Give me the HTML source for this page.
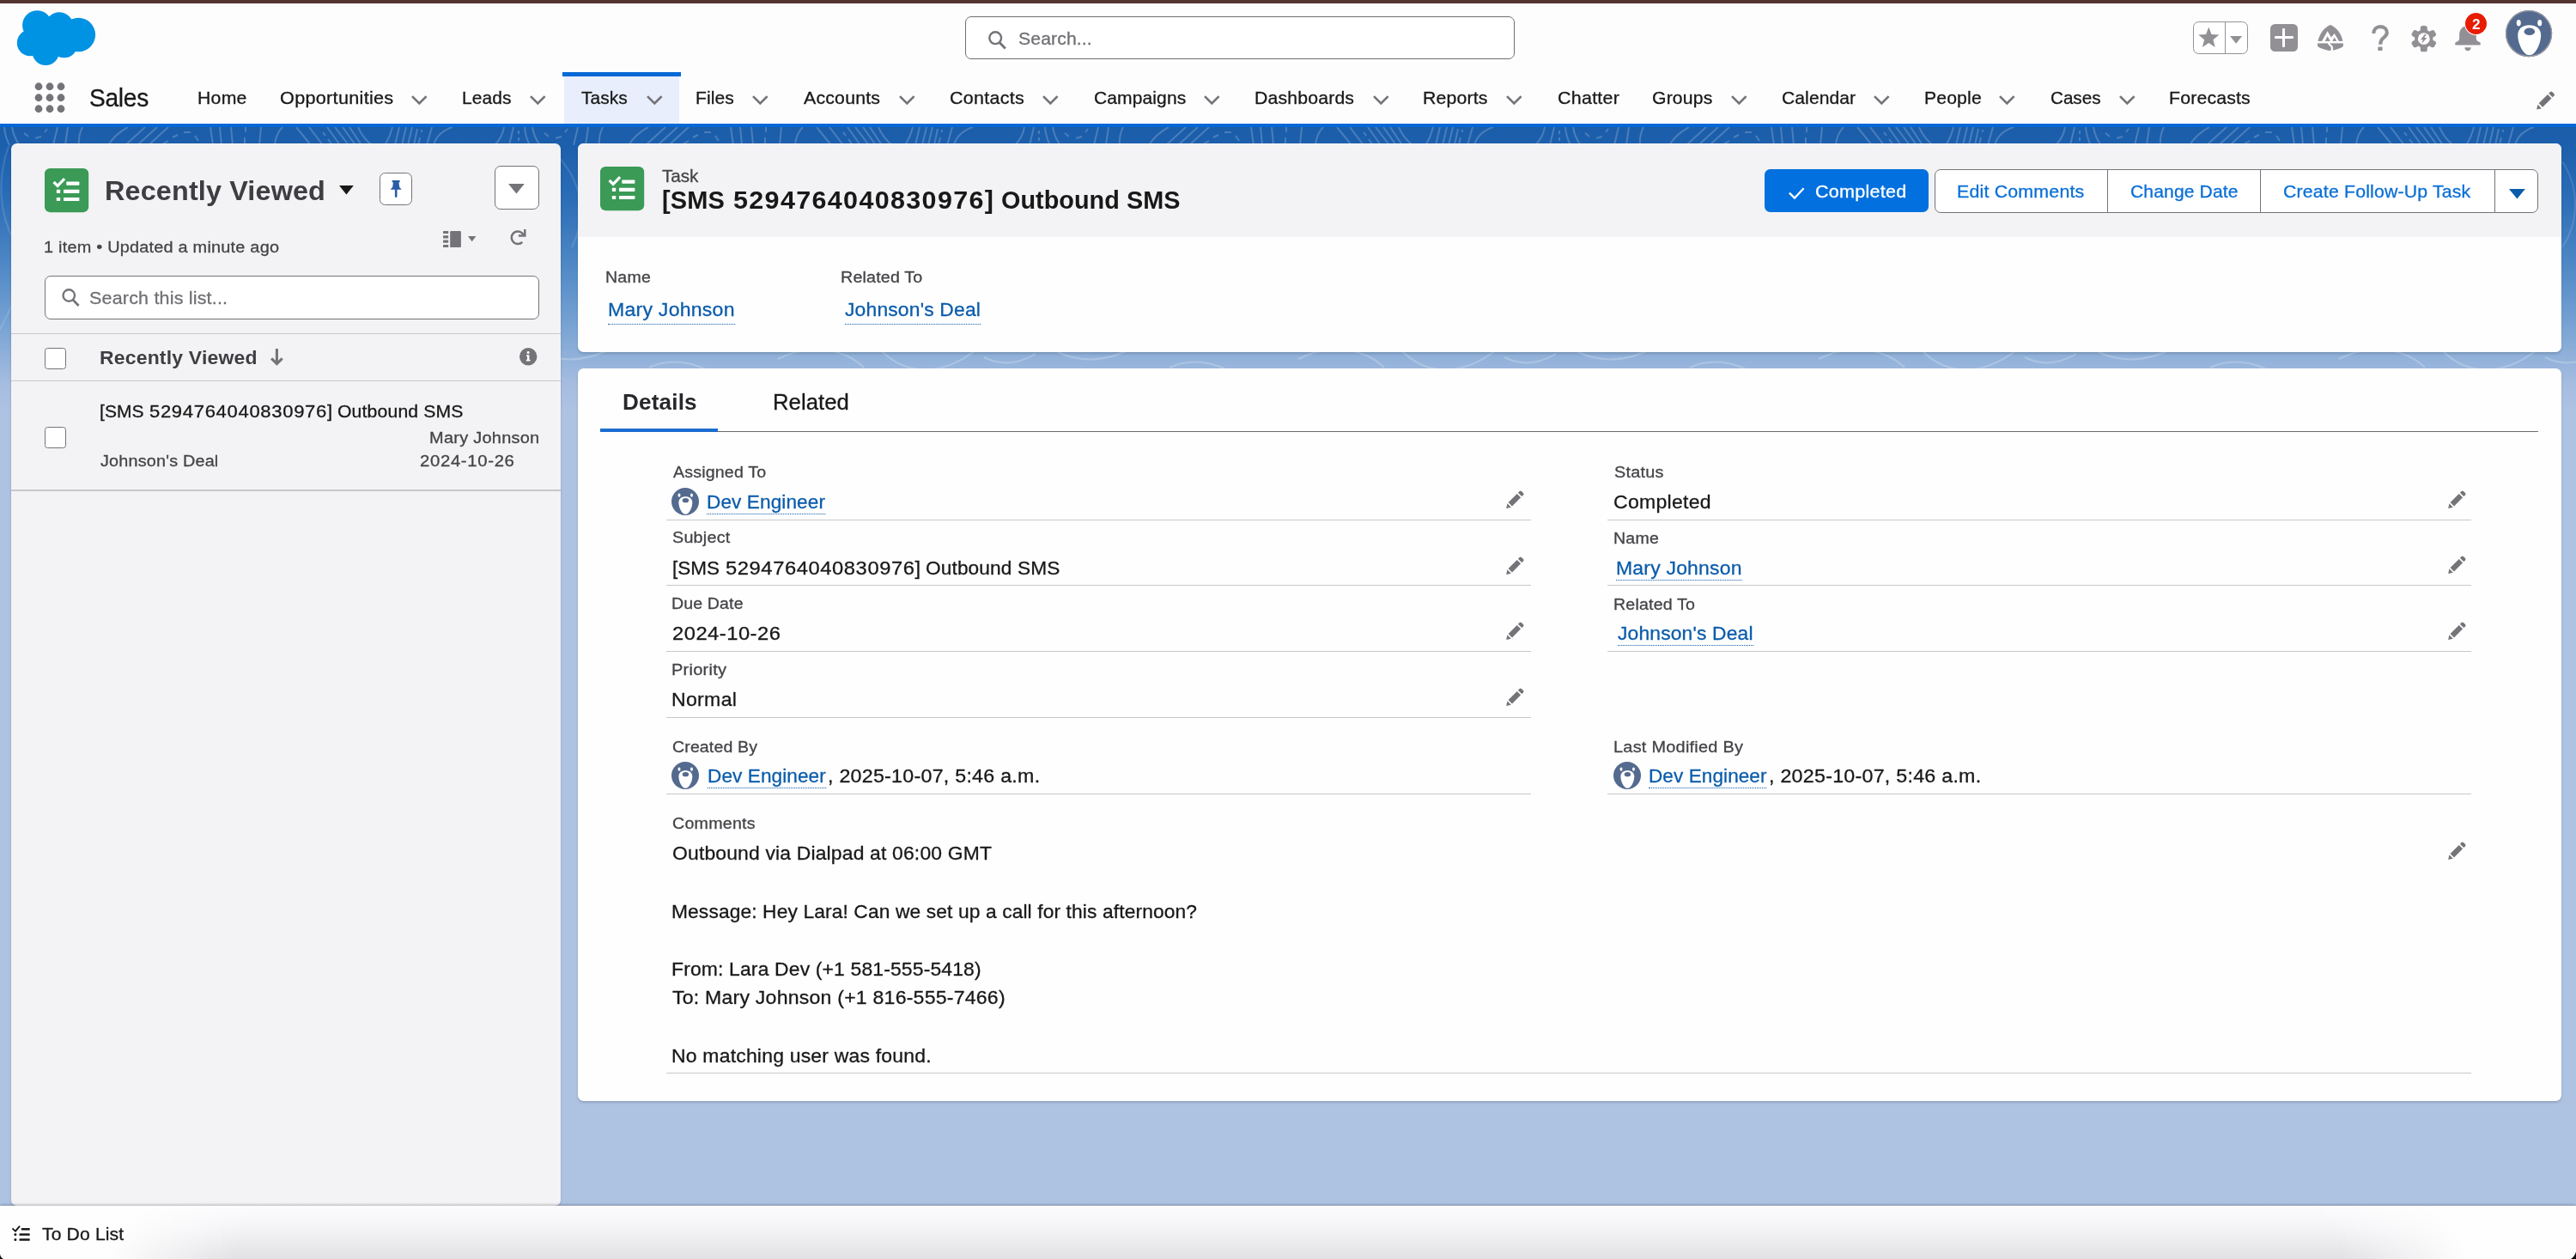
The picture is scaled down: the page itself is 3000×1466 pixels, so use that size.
<!DOCTYPE html>
<html><head><meta charset="utf-8"><title>Task</title>
<style>
*{box-sizing:border-box;margin:0;padding:0}
html,body{width:3000px;height:1466px;overflow:hidden}
body{position:relative;background:#AEC2E2;font-family:"Liberation Sans",sans-serif;}
.a{position:absolute}
.t{position:absolute;white-space:nowrap;line-height:1;display:block;transform-origin:0 0;-webkit-text-stroke:.3px currentColor}
.lk{border-bottom:1.6px dotted #0B5CAB;padding-bottom:1.8px}
.lk.h{padding-bottom:4.4px}
.ln{position:absolute;height:1.5px;background:#C9C7CC}
svg{position:absolute;overflow:visible}
</style></head><body>
<!-- banner -->
<div class="a" id="banner" style="left:0;top:148px;width:3000px;height:330px;background:linear-gradient(to bottom,#1B5DA9 0px,#1C5FAC 22px,#2A6CB6 80px,#4A84C3 150px,#6E9DD0 215px,#8FB0D9 265px,#A6BDE0 300px,#AEC2E2 330px)"></div>
<svg id="pat" style="left:0;top:148px" width="3000" height="330" viewBox="0 0 3000 330">
<defs>
<pattern id="pp" width="606" height="330" patternUnits="userSpaceOnUse">
<g fill="none" stroke="#fff" stroke-width="2">
<path stroke-opacity=".2" d="M5 0Q6 12 11 21M14 0Q16 12 23 21M28 7L33 11M41 13L48 11M52 6L55 2M67 0L62 21M79 0L76 21M96 0Q91 10 92 21M149 0Q134 8 126 21M169 0L146 21M183 0L160 21M196 0L173 21M196 16L189 20M201 12L207 9M214 6L222 6M227 10L231 16M245 0L248 21M256 0L258 21M269 0L271 21M286 0L286 6M285 12L285 21M304 0L302 21M329 0Q321 8 320 21M345 0L362 21M360 0L376 21M376 6L379 10M382 14L387 21M381 0L396 21M390 0L406 21M399 0L414 21M407 0L421 21M417 0Q422 12 433 21M457 0Q454 12 448 21M465 0L460 21M473 0L468 21M480 0L475 21M486 2L482 21M491 3L491 6M489 12L487 21M503 0L497 21M527 0Q509 6 505 21M587 0Q585 12 576 21M598 0L593 21M604 4L604 8M604 12L604 16"/>
<path stroke-opacity=".13" d="M10 22c-14 40-10 80 6 110s4 70-20 110M40 30c30 30 40 70 20 110M600 24c-14 40-18 70-6 110M560 40c20 30 20 70 0 100"/>
<path stroke-opacity=".22" d="M300 270c40-20 80-10 100 10M420 260c30 30 70 30 110 0M150 280c20-10 50-10 80 10M20 262c30 14 60 10 90-6M540 268c20 10 40 8 60-4"/>
</g>
</pattern>
</defs>
<rect width="3000" height="330" fill="url(#pp)"/>
</svg>

<!-- header -->
<div class="a" style="left:0;top:0;width:3000px;height:144px;background:#FDFDFE"></div>
<div class="a" style="left:0;top:0;width:3000px;height:3.8px;background:#55342F"></div>
<div class="a" style="left:0;top:144px;width:3000px;height:4px;background:#0568D6"></div>
<!-- active tab -->
<div class="a" style="left:657px;top:88px;width:134px;height:56px;background:#E8EEFC"></div>
<div class="a" style="left:655px;top:84px;width:138px;height:5px;background:#0568D6"></div>

<!-- cloud -->
<svg style="left:0;top:0" width="130" height="90" viewBox="0 0 130 90"><g fill="#0092E3">
<circle cx="43.3" cy="29.4" r="17.2"/><circle cx="69" cy="30.5" r="16.3"/><circle cx="91.3" cy="40.5" r="19.8"/>
<circle cx="35" cy="50" r="15.2"/><circle cx="53.2" cy="60.4" r="15.6"/><circle cx="74.7" cy="51.6" r="15.6"/><circle cx="58" cy="44" r="18"/></g></svg>

<!-- waffle -->
<svg style="left:40px;top:96px" width="36" height="36" viewBox="0 0 36 36"><g fill="#747378">
<circle cx="5" cy="4.75" r="4.4"/><circle cx="18" cy="4.75" r="4.4"/><circle cx="31" cy="4.75" r="4.4"/>
<circle cx="5" cy="17.75" r="4.4"/><circle cx="18" cy="17.75" r="4.4"/><circle cx="31" cy="17.75" r="4.4"/>
<circle cx="5" cy="30.75" r="4.4"/><circle cx="18" cy="30.75" r="4.4"/><circle cx="31" cy="30.75" r="4.4"/></g></svg>

<!-- global search -->
<div class="a" style="left:1124px;top:19px;width:640px;height:49.5px;border:1.5px solid #6F6E73;border-radius:7px;background:#fff"></div>
<svg style="left:1151px;top:35.6px" width="21" height="21" viewBox="0 0 21 21"><circle cx="8.200" cy="8.200" r="6.900" fill="none" stroke="#747378" stroke-width="2.400"/><path d="M12.800 13.200L19.800 20.400" stroke="#747378" stroke-width="2.900" stroke-linecap="butt"/></svg>

<!-- CHEVRONS -->
<svg style="left:478.75px;top:111px" width="18.6" height="11.2" viewBox="0 0 18.6 11.2"><path fill="none" stroke="#747378" stroke-width="2.700" d="M1 1.100l8.300 8.300 8.300-8.300"/></svg>
<svg style="left:617px;top:111px" width="18.6" height="11.2" viewBox="0 0 18.6 11.2"><path fill="none" stroke="#747378" stroke-width="2.700" d="M1 1.100l8.300 8.300 8.300-8.300"/></svg>
<svg style="left:752.5px;top:111px" width="18.6" height="11.2" viewBox="0 0 18.6 11.2"><path fill="none" stroke="#747378" stroke-width="2.700" d="M1 1.100l8.300 8.300 8.300-8.300"/></svg>
<svg style="left:876.25px;top:111px" width="18.6" height="11.2" viewBox="0 0 18.6 11.2"><path fill="none" stroke="#747378" stroke-width="2.700" d="M1 1.100l8.300 8.300 8.300-8.300"/></svg>
<svg style="left:1047px;top:111px" width="18.6" height="11.2" viewBox="0 0 18.6 11.2"><path fill="none" stroke="#747378" stroke-width="2.700" d="M1 1.100l8.300 8.300 8.300-8.300"/></svg>
<svg style="left:1214.25px;top:111px" width="18.6" height="11.2" viewBox="0 0 18.6 11.2"><path fill="none" stroke="#747378" stroke-width="2.700" d="M1 1.100l8.300 8.300 8.300-8.300"/></svg>
<svg style="left:1402px;top:111px" width="18.6" height="11.2" viewBox="0 0 18.6 11.2"><path fill="none" stroke="#747378" stroke-width="2.700" d="M1 1.100l8.300 8.300 8.300-8.300"/></svg>
<svg style="left:1599px;top:111px" width="18.6" height="11.2" viewBox="0 0 18.6 11.2"><path fill="none" stroke="#747378" stroke-width="2.700" d="M1 1.100l8.300 8.300 8.300-8.300"/></svg>
<svg style="left:1754.25px;top:111px" width="18.6" height="11.2" viewBox="0 0 18.6 11.2"><path fill="none" stroke="#747378" stroke-width="2.700" d="M1 1.100l8.300 8.300 8.300-8.300"/></svg>
<svg style="left:2015.5px;top:111px" width="18.6" height="11.2" viewBox="0 0 18.6 11.2"><path fill="none" stroke="#747378" stroke-width="2.700" d="M1 1.100l8.300 8.300 8.300-8.300"/></svg>
<svg style="left:2182px;top:111px" width="18.6" height="11.2" viewBox="0 0 18.6 11.2"><path fill="none" stroke="#747378" stroke-width="2.700" d="M1 1.100l8.300 8.300 8.300-8.300"/></svg>
<svg style="left:2328px;top:111px" width="18.6" height="11.2" viewBox="0 0 18.6 11.2"><path fill="none" stroke="#747378" stroke-width="2.700" d="M1 1.100l8.300 8.300 8.300-8.300"/></svg>
<svg style="left:2468px;top:111px" width="18.6" height="11.2" viewBox="0 0 18.6 11.2"><path fill="none" stroke="#747378" stroke-width="2.700" d="M1 1.100l8.300 8.300 8.300-8.300"/></svg>

<!-- nav pencil -->
<svg style="left:2953.5px;top:105.5px" width="21.5" height="21.5" viewBox="0 0 21 21"><g fill="#747378">
<path d="M.2 20.900l1.200-5.600 4.400 4.400z"/>
<path d="M2.600 14L12.700 3.900l4.400 4.400L7 18.400z"/>
<path d="M13.900 2.700l1.700-1.700a1.600 1.600 0 0 1 2.300 0l2.100 2.100a1.600 1.600 0 0 1 0 2.300l-1.700 1.700z"/>
</g></svg>

<!-- favorites -->
<div class="a" style="left:2554px;top:25px;width:64px;height:37.8px;border:1.3px solid #939196;border-radius:6.5px;background:#fff"></div>
<div class="a" style="left:2590.8px;top:25px;width:1.3px;height:37.8px;background:#939196"></div>
<svg style="left:2560.400px;top:31.300px" width="24.600" height="24.600" viewBox="0 0 24 24"><path fill="#929095" d="M12 .6l3.1 8.2 8.7.5-6.8 5.5 2.3 8.5L12 18.500 4.700 23.300l2.300-8.500L.200 9.300l8.700-.5z"/></svg>
<svg style="left:2597.4px;top:42.1px" width="14.2" height="8.8" viewBox="0 0 14 8.800"><path fill="#929095" d="M0 0h14L7 8.800z"/></svg>
<!-- plus -->
<div class="a" style="left:2644px;top:28px;width:32px;height:32px;border-radius:5.5px;background:#929095"></div>
<div class="a" style="left:2648.8px;top:42.4px;width:22px;height:3.1px;background:#fff;border-radius:1px"></div>
<div class="a" style="left:2658.3px;top:33px;width:3.1px;height:21.6px;background:#fff;border-radius:1px"></div>
<!-- trailhead -->
<svg style="left:2699px;top:29px" width="30" height="30" viewBox="0 0 30 30">
<path fill="#929095" d="M15 0c1.200 0 7 3.500 10.500 9C28.800 14 30 20.500 30 23.500c0 1.500-1 2.500-3.500 3.500C23 28.500 18.500 30 15 30s-8-1.500-11.500-3C1 26 0 25 0 23.500 0 20.500 1.200 14 4.500 9 8 3.500 13.800 0 15 0z"/>
<path fill="#fff" d="M4.600 19.800L11.600 7.300l4.300 7.200 3.800-4.600 5.800 9.900z"/>
<path fill="#929095" d="M8.700 18.900l2.900-5.600 3.200 5.600z"/>
<path fill="#929095" d="M17.300 18.900l2.300-4.400 2.700 4.400z"/>
<path fill="#fff" d="M0 18.900h30v2.500H0z"/>
<path fill="none" stroke="#fff" stroke-width="2.300" d="M12.800 21c.6 2.400 4.200 3 4.200 5.800 0 1.200-.5 2.200-.3 3.600"/>
</svg>
<!-- question -->
<svg style="left:2762px;top:29px" width="20" height="30" viewBox="0 0 20 30"><path fill="none" stroke="#929095" stroke-width="4.100" stroke-linecap="butt" d="M2.300 10C2.400 5.200 5.600 2.150 10 2.150c4.600 0 7.850 2.800 7.850 6.700 0 3.400-2 4.800-4.400 6.500-2.300 1.600-3.300 3-3.300 7.500"/><rect x="7.300" y="25.400" width="5.300" height="4.600" rx="1" fill="#929095"/></svg>
<!-- gear -->
<svg style="left:2809px;top:29.800px" width="27.600" height="30.300" viewBox="-13.800 -15.150 27.600 30.300">
<g fill="#929095"><circle r="10.600"/>
<g id="tooth"><rect x="-4" y="-15.150" width="8" height="8" rx="2.600"/></g>
<g transform="rotate(60)"><rect x="-4" y="-15.150" width="8" height="8" rx="2.600"/></g><g transform="rotate(120)"><rect x="-4" y="-15.150" width="8" height="8" rx="2.600"/></g><g transform="rotate(180)"><rect x="-4" y="-15.150" width="8" height="8" rx="2.600"/></g><g transform="rotate(240)"><rect x="-4" y="-15.150" width="8" height="8" rx="2.600"/></g><g transform="rotate(300)"><rect x="-4" y="-15.150" width="8" height="8" rx="2.600"/></g></g>
<circle r="6.900" fill="#fff"/>
<path fill="#929095" d="M1.300-5.400L-3.900 1h2.900L-2.300 5.600 3.700-1.100H.6L3-5.400z"/>
</svg>
<!-- bell -->
<svg style="left:2859px;top:29.800px" width="30" height="29.500" viewBox="0 0 30 29.500">
<path fill="#929095" d="M15 0c5.500 0 9.800 4 9.800 10v4.500c0 2.200 1.200 3.600 3.400 4.300 1 .3 1.600.8 1.600 1.800v1.200c0 .5-.4.800-.9.800H1.100c-.5 0-.9-.3-.9-.8v-1.200c0-1 .6-1.500 1.600-1.800 2.200-.7 3.400-2.100 3.400-4.300V10C5.200 4 9.500 0 15 0z"/>
<path fill="#929095" d="M11.300 25.200h7.400c0 2-1.600 4-3.700 4s-3.700-2-3.700-4z"/>
</svg>
<div class="a" style="left:2870.8px;top:15px;width:25.400px;height:25.400px;border-radius:50%;background:#E81C02;box-shadow:0 0 0 1px #fff"></div>
<!-- avatar big -->
<svg style="left:2917.500px;top:12.400px" width="54.200" height="54.200" viewBox="0 0 54 54"><g><circle cx="27" cy="27" r="27" fill="#546A8F"/>
<ellipse cx="15.200" cy="14.600" rx="2.500" ry="3.600" fill="#fff"/><ellipse cx="39.600" cy="14.600" rx="2.500" ry="3.600" fill="#fff"/>
<path fill="#fff" d="M27.600 17.200c7.900 0 13.400 4.100 13.400 11.700 0 9-5.900 23.200-13.400 23.200S14.200 37.900 14.200 28.900c0-7.600 5.500-11.700 13.400-11.700z"/>
<ellipse cx="27.700" cy="24.700" rx="6.300" ry="4.300" fill="#546A8F"/></g><circle cx="27" cy="27" r="26.400" fill="none" stroke="#9A9A9F" stroke-width="1.300"/></svg>

<!-- LEFT PANEL -->
<div class="a" style="left:13px;top:167px;width:640px;height:1236.500px;background:#F3F2F4;border-radius:6.500px;box-shadow:0 1px 3px rgba(0,0,0,.18)"></div>
<div class="ln" style="left:13px;top:387.800px;width:640px"></div>
<div class="ln" style="left:13px;top:442.600px;width:640px"></div>
<div class="ln" style="left:13px;top:570.400px;width:640px"></div>
<svg style="left:52px;top:195.700px" width="51.200" height="51.200" viewBox="0 0 51.200 51.200"><g><rect width="51.200" height="51.200" rx="6.200" fill="#3A9A56"/>
<path fill="none" stroke="#fff" stroke-width="3.200" d="M10.600 16l4.500 4.400 8-8.300"/>
<g fill="#fff"><rect x="25.300" y="15.500" width="15.100" height="4.300" rx=".7"/><rect x="13.800" y="24.800" width="4.400" height="4.200" rx=".7"/><rect x="22" y="24.800" width="18.400" height="4.200" rx=".7"/><rect x="13.800" y="33.900" width="4.400" height="4.200" rx=".7"/><rect x="22" y="33.900" width="18.400" height="4.200" rx=".7"/></g></g></svg>
<svg style="left:394.800px;top:216px" width="16.800" height="10.400" viewBox="0 0 16.800 10.400"><path fill="#181818" d="M0 0h16.800L8.400 10.400z"/></svg>
<!-- pin button -->
<div class="a" style="left:442px;top:201px;width:38px;height:38px;border:1.200px solid #747378;border-radius:6.500px;background:#fff"></div>
<svg style="left:455px;top:210px" width="12.400" height="20.200" viewBox="0 0 12.400 20.200"><path fill="#2A5CA8" d="M1.700 0h8.900v2.200H9.500l.6 5.200c.2 1.300 2.200 1.600 2.300 3.400H7.500v8.200l-1.300 1.200-1.300-1.200v-8.200H0c.1-1.800 2.100-2.100 2.300-3.400l.6-5.200H1.700z"/></svg>
<!-- dropdown button -->
<div class="a" style="left:576.200px;top:193px;width:51.600px;height:50.600px;border:1.200px solid #747378;border-radius:7px;background:#fff"></div>
<svg style="left:592.300px;top:214.100px" width="18.800" height="11.600" viewBox="0 0 18.800 11.600"><path fill="#747378" d="M0 0h18.800L9.400 11.600z"/></svg>
<!-- list view icon -->
<svg style="left:515.600px;top:268.700px" width="21" height="19.100" viewBox="0 0 21 19.100"><g fill="#747378"><rect x="0" y="0" width="6.200" height="3.100" rx=".6"/><rect x="0" y="5.300" width="6.200" height="3.100" rx=".6"/><rect x="0" y="10.600" width="6.200" height="3.100" rx=".6"/><rect x="0" y="15.900" width="6.200" height="3.200" rx=".6"/><rect x="8.200" y="0" width="12.700" height="19.100" rx="1.200"/></g></svg>
<svg style="left:544.700px;top:275.200px" width="9.400" height="6.200" viewBox="0 0 9.400 6.200"><path fill="#747378" d="M0 0h9.400L4.700 6.200z"/></svg>
<!-- refresh -->
<svg style="left:592.500px;top:266.800px" width="19.600" height="18.700" viewBox="0 0 19.600 18.700"><path fill="none" stroke="#747378" stroke-width="2.500" d="M15.300 14.800a7.300 7.300 0 1 1-.6-10.700l3.200 3.200"/><path fill="none" stroke="#747378" stroke-width="2.500" d="M18.300 0v7.600h-7.400"/></svg>
<!-- list search -->
<div class="a" style="left:52px;top:321px;width:575.800px;height:50.600px;border:1.300px solid #747378;border-radius:7px;background:#fff"></div>
<svg style="left:71.700px;top:336px" width="21" height="20.500" viewBox="0 0 21 21"><circle cx="8.200" cy="8.200" r="6.900" fill="none" stroke="#747378" stroke-width="2.400"/><path d="M12.800 13.200L19.800 20.400" stroke="#747378" stroke-width="2.900" stroke-linecap="butt"/></svg>
<!-- checkboxes -->
<div class="a" style="left:52px;top:405px;width:25px;height:24.600px;border:1.300px solid #747378;border-radius:3.500px;background:#fff"></div>
<div class="a" style="left:52px;top:497.200px;width:25px;height:24.600px;border:1.300px solid #747378;border-radius:3.500px;background:#fff"></div>
<!-- arrow down -->
<svg style="left:314.800px;top:406.200px" width="14.800" height="19.800" viewBox="0 0 14.800 19.800"><path fill="none" stroke="#747378" stroke-width="3.100" d="M7.400 0v17M1.100 11.300l6.300 6.300 6.300-6.300"/></svg>
<!-- info -->
<svg style="left:605px;top:405px" width="20.400" height="20.400" viewBox="0 0 20.400 20.400"><circle cx="10.200" cy="10.200" r="10.200" fill="#747378"/><circle cx="10.100" cy="5.600" r="1.500" fill="#fff"/><path fill="#fff" d="M8 8.300h3.400v5.500h1.100v1.700H7.900v-1.700h1.100v-3.800H8z"/></svg>

<!-- RIGHT CARD 1 -->
<div class="a" style="left:672.500px;top:167px;width:2310px;height:242.800px;background:#FEFEFE;border-radius:6.500px;box-shadow:0 2px 3px rgba(0,0,0,.16);overflow:hidden"><div style="height:109px;background:#F3F2F4"></div></div>
<svg style="left:699px;top:193.600px" width="51.200" height="51.200" viewBox="0 0 51.200 51.200"><g><rect width="51.200" height="51.200" rx="6.200" fill="#3A9A56"/>
<path fill="none" stroke="#fff" stroke-width="3.200" d="M10.600 16l4.500 4.400 8-8.300"/>
<g fill="#fff"><rect x="25.300" y="15.500" width="15.100" height="4.300" rx=".7"/><rect x="13.800" y="24.800" width="4.400" height="4.200" rx=".7"/><rect x="22" y="24.800" width="18.400" height="4.200" rx=".7"/><rect x="13.800" y="33.900" width="4.400" height="4.200" rx=".7"/><rect x="22" y="33.900" width="18.400" height="4.200" rx=".7"/></g></g></svg>
<!-- buttons -->
<div class="a" style="left:2055px;top:197px;width:191px;height:50px;background:#0270DE;border-radius:6.500px"></div>
<svg style="left:2082.500px;top:217.500px" width="19" height="14" viewBox="0 0 19 14"><path fill="none" stroke="#fff" stroke-width="2.300" d="M.9 6.600L7 12.600 17.600 1.300"/></svg>
<div class="a" style="left:2253px;top:197px;width:703px;height:50.600px;border:1.400px solid #747378;border-radius:7px;background:#fff"></div>
<div class="a" style="left:2453.700px;top:197px;width:1.400px;height:50.600px;background:#747378"></div>
<div class="a" style="left:2631.800px;top:197px;width:1.400px;height:50.600px;background:#747378"></div>
<div class="a" style="left:2904.800px;top:197px;width:1.400px;height:50.600px;background:#747378"></div>
<svg style="left:2922.400px;top:220px" width="18.800" height="11.400" viewBox="0 0 18.800 11.400"><path fill="#0B5CAB" d="M0 0h18.800L9.400 11.400z"/></svg>

<!-- RIGHT CARD 2 -->
<div class="a" style="left:672.500px;top:428.800px;width:2310px;height:853.500px;background:#FEFEFE;border-radius:6.500px;box-shadow:0 2px 3px rgba(0,0,0,.16)"></div>
<div class="a" style="left:699px;top:501.500px;width:2257px;height:1.300px;background:#6B6B70"></div>
<div class="a" style="left:699px;top:498.600px;width:137px;height:4.200px;background:#1B6DD0"></div>
<!-- field lines -->
<div class="ln" style="left:776.250px;top:604.600px;width:1006.800px"></div>
<div class="ln" style="left:776.250px;top:680.800px;width:1006.800px"></div>
<div class="ln" style="left:776.250px;top:757.600px;width:1006.800px"></div>
<div class="ln" style="left:776.250px;top:834.600px;width:1006.800px"></div>
<div class="ln" style="left:776.250px;top:923.800px;width:1006.800px"></div>
<div class="ln" style="left:1872px;top:604.600px;width:1006px"></div>
<div class="ln" style="left:1872px;top:680.800px;width:1006px"></div>
<div class="ln" style="left:1872px;top:757.600px;width:1006px"></div>
<div class="ln" style="left:1872px;top:923.800px;width:1006px"></div>
<div class="ln" style="left:776.250px;top:1248.600px;width:2101.800px"></div>
<!-- pencils -->
<svg style="left:1754px;top:571px" width="21" height="21" viewBox="0 0 21 21"><g fill="#747378">
<path d="M.2 20.900l1.200-5.600 4.400 4.400z"/>
<path d="M2.600 14L12.700 3.900l4.400 4.400L7 18.400z"/>
<path d="M13.900 2.700l1.700-1.700a1.600 1.600 0 0 1 2.300 0l2.100 2.100a1.600 1.600 0 0 1 0 2.300l-1.700 1.700z"/>
</g></svg>
<svg style="left:1754px;top:648px" width="21" height="21" viewBox="0 0 21 21"><g fill="#747378">
<path d="M.2 20.900l1.200-5.600 4.400 4.400z"/>
<path d="M2.600 14L12.700 3.900l4.400 4.400L7 18.400z"/>
<path d="M13.900 2.700l1.700-1.700a1.600 1.600 0 0 1 2.300 0l2.100 2.100a1.600 1.600 0 0 1 0 2.300l-1.700 1.700z"/>
</g></svg>
<svg style="left:1754px;top:724.4px" width="21" height="21" viewBox="0 0 21 21"><g fill="#747378">
<path d="M.2 20.900l1.200-5.600 4.400 4.400z"/>
<path d="M2.600 14L12.700 3.900l4.400 4.400L7 18.400z"/>
<path d="M13.900 2.700l1.700-1.700a1.600 1.600 0 0 1 2.300 0l2.100 2.100a1.600 1.600 0 0 1 0 2.300l-1.700 1.700z"/>
</g></svg>
<svg style="left:1754px;top:800.8px" width="21" height="21" viewBox="0 0 21 21"><g fill="#747378">
<path d="M.2 20.900l1.200-5.600 4.400 4.400z"/>
<path d="M2.600 14L12.700 3.900l4.400 4.400L7 18.400z"/>
<path d="M13.900 2.700l1.700-1.700a1.600 1.600 0 0 1 2.300 0l2.100 2.100a1.600 1.600 0 0 1 0 2.300l-1.700 1.700z"/>
</g></svg>
<svg style="left:2850.5px;top:570.7px" width="21" height="21" viewBox="0 0 21 21"><g fill="#747378">
<path d="M.2 20.900l1.200-5.600 4.400 4.400z"/>
<path d="M2.600 14L12.700 3.900l4.400 4.400L7 18.400z"/>
<path d="M13.900 2.700l1.700-1.700a1.600 1.600 0 0 1 2.300 0l2.100 2.100a1.600 1.600 0 0 1 0 2.300l-1.700 1.700z"/>
</g></svg>
<svg style="left:2850.5px;top:647.4px" width="21" height="21" viewBox="0 0 21 21"><g fill="#747378">
<path d="M.2 20.900l1.200-5.600 4.400 4.400z"/>
<path d="M2.600 14L12.700 3.900l4.400 4.400L7 18.400z"/>
<path d="M13.900 2.700l1.700-1.700a1.600 1.600 0 0 1 2.300 0l2.100 2.100a1.600 1.600 0 0 1 0 2.300l-1.700 1.700z"/>
</g></svg>
<svg style="left:2850.5px;top:724px" width="21" height="21" viewBox="0 0 21 21"><g fill="#747378">
<path d="M.2 20.900l1.200-5.600 4.400 4.400z"/>
<path d="M2.600 14L12.700 3.900l4.400 4.400L7 18.400z"/>
<path d="M13.900 2.700l1.700-1.700a1.600 1.600 0 0 1 2.300 0l2.100 2.100a1.600 1.600 0 0 1 0 2.300l-1.700 1.700z"/>
</g></svg>
<svg style="left:2850.5px;top:979.5px" width="21" height="21" viewBox="0 0 21 21"><g fill="#747378">
<path d="M.2 20.900l1.200-5.600 4.400 4.400z"/>
<path d="M2.600 14L12.700 3.900l4.400 4.400L7 18.400z"/>
<path d="M13.900 2.700l1.700-1.700a1.600 1.600 0 0 1 2.300 0l2.100 2.100a1.600 1.600 0 0 1 0 2.300l-1.700 1.700z"/>
</g></svg>
<!-- small avatars -->
<svg style="left:782px;top:568px" width="32" height="32" viewBox="0 0 54 54"><g><circle cx="27" cy="27" r="27" fill="#546A8F"/>
<ellipse cx="15.200" cy="14.600" rx="2.500" ry="3.600" fill="#fff"/><ellipse cx="39.600" cy="14.600" rx="2.500" ry="3.600" fill="#fff"/>
<path fill="#fff" d="M27.600 17.200c7.900 0 13.400 4.100 13.400 11.700 0 9-5.900 23.200-13.400 23.200S14.200 37.900 14.200 28.900c0-7.600 5.500-11.700 13.400-11.700z"/>
<ellipse cx="27.700" cy="24.700" rx="6.300" ry="4.300" fill="#546A8F"/></g></svg>
<svg style="left:782px;top:887px" width="32" height="32" viewBox="0 0 54 54"><g><circle cx="27" cy="27" r="27" fill="#546A8F"/>
<ellipse cx="15.200" cy="14.600" rx="2.500" ry="3.600" fill="#fff"/><ellipse cx="39.600" cy="14.600" rx="2.500" ry="3.600" fill="#fff"/>
<path fill="#fff" d="M27.600 17.200c7.900 0 13.400 4.100 13.400 11.700 0 9-5.900 23.200-13.400 23.200S14.200 37.900 14.200 28.900c0-7.600 5.500-11.700 13.400-11.700z"/>
<ellipse cx="27.700" cy="24.700" rx="6.300" ry="4.300" fill="#546A8F"/></g></svg>
<svg style="left:1878.500px;top:887px" width="32" height="32" viewBox="0 0 54 54"><g><circle cx="27" cy="27" r="27" fill="#546A8F"/>
<ellipse cx="15.200" cy="14.600" rx="2.500" ry="3.600" fill="#fff"/><ellipse cx="39.600" cy="14.600" rx="2.500" ry="3.600" fill="#fff"/>
<path fill="#fff" d="M27.600 17.200c7.900 0 13.400 4.100 13.400 11.700 0 9-5.900 23.200-13.400 23.200S14.200 37.900 14.200 28.900c0-7.600 5.500-11.700 13.400-11.700z"/>
<ellipse cx="27.700" cy="24.700" rx="6.300" ry="4.300" fill="#546A8F"/></g></svg>

<!-- BOTTOM BAR -->
<div class="a" style="left:0;top:1403.500px;width:3000px;height:62.500px;background:radial-gradient(ellipse 1410px 260px at 1500px 62px,rgba(254,254,254,0) 0%,rgba(254,254,254,0) 87%,#FEFEFE 97.5%),linear-gradient(to bottom,#FCFBFD 0%,#F4F3F6 40%,#E2E1E4 100%);box-shadow:0 -1px 3px rgba(0,0,0,.28)"></div>
<svg style="left:14px;top:1427.300px" width="21" height="18.400" viewBox="0 0 21 18.400"><g fill="#181818"><path fill="none" stroke="#181818" stroke-width="1.900" d="M.4 3.400l3.600 3.300L9 .6"/><rect x="10.800" y="3.100" width="9.900" height="2.400" rx=".5"/><rect x="8.500" y="9.300" width="12.200" height="2.400" rx=".5"/><rect x="8.500" y="15.300" width="12.200" height="2.400" rx=".5"/><circle cx="3.900" cy="10.500" r="1.500"/><circle cx="3.900" cy="16.400" r="1.500"/></g></svg>
<!-- window corners -->
<svg style="left:0;top:1459.500px" width="6.500" height="6.500" viewBox="0 0 10 10"><path d="M0 0A10 10 0 0 0 10 10H0z" fill="#111"/></svg>
<svg style="left:2990.500px;top:1452.500px" width="9.500" height="13.500" viewBox="0 0 10 10" preserveAspectRatio="none"><path d="M10 0A10 10 0 0 1 0 10H10z" fill="#111"/></svg>

<!-- symbol defs -->
<svg width="0" height="0" style="left:0;top:0"><defs>
<g id="pencil" fill="#747378">
<path d="M.2 20.900l1.200-5.600 4.400 4.400z"/>
<path d="M2.600 14L12.700 3.900l4.400 4.400L7 18.400z"/>
<path d="M13.900 2.700l1.700-1.700a1.600 1.600 0 0 1 2.300 0l2.100 2.100a1.600 1.600 0 0 1 0 2.300l-1.700 1.700z"/>
</g>
<g id="task"><rect width="51.200" height="51.200" rx="6.200" fill="#3A9A56"/>
<path fill="none" stroke="#fff" stroke-width="3.200" d="M10.600 16l4.500 4.400 8-8.300"/>
<g fill="#fff"><rect x="25.300" y="15.500" width="15.100" height="4.300" rx=".7"/><rect x="13.800" y="24.800" width="4.400" height="4.200" rx=".7"/><rect x="22" y="24.800" width="18.400" height="4.200" rx=".7"/><rect x="13.800" y="33.900" width="4.400" height="4.200" rx=".7"/><rect x="22" y="33.900" width="18.400" height="4.200" rx=".7"/></g></g>
<g id="bear"><circle cx="27" cy="27" r="27" fill="#546A8F"/>
<ellipse cx="15.200" cy="14.600" rx="2.500" ry="3.600" fill="#fff"/><ellipse cx="39.600" cy="14.600" rx="2.500" ry="3.600" fill="#fff"/>
<path fill="#fff" d="M27.600 17.200c7.900 0 13.400 4.100 13.400 11.700 0 9-5.900 23.200-13.400 23.200S14.200 37.900 14.200 28.900c0-7.600 5.500-11.700 13.400-11.700z"/>
<ellipse cx="27.700" cy="24.700" rx="6.300" ry="4.300" fill="#546A8F"/></g>
</defs></svg>

<div class="a" style="left:0;top:0;width:3000px;height:1466px;will-change:transform">
<span class="t" style="left:1185.98px;top:35.00px;font-size:20.8px;letter-spacing:0.120px;color:#706F74;transform:scaleX(1.0182);">Search...</span>
<span class="t" style="left:2879.26px;top:21.00px;font-size:16px;letter-spacing:0.000px;color:#fff;transform:scaleX(1.0769);font-weight:700;-webkit-text-stroke:0;">2</span>
<span class="t" style="left:103.77px;top:100.00px;font-size:28.8px;letter-spacing:-0.276px;color:#181818;transform:scaleX(0.9770);">Sales</span>
<span class="t" style="left:229.66px;top:104.00px;font-size:20.8px;letter-spacing:0.246px;color:#181818;transform:scaleX(1.0214);">Home</span>
<span class="t" style="left:326.21px;top:104.00px;font-size:20.8px;letter-spacing:0.270px;color:#181818;transform:scaleX(1.0415);">Opportunities</span>
<span class="t" style="left:538.44px;top:104.00px;font-size:20.8px;letter-spacing:0.077px;color:#181818;transform:scaleX(1.0086);">Leads</span>
<span class="t" style="left:677.25px;top:104.00px;font-size:20.8px;letter-spacing:0.048px;color:#181818;transform:scaleX(1.0056);">Tasks</span>
<span class="t" style="left:810.43px;top:104.00px;font-size:20.8px;letter-spacing:0.078px;color:#181818;transform:scaleX(1.0113);">Files</span>
<span class="t" style="left:936.40px;top:104.00px;font-size:20.8px;letter-spacing:0.192px;color:#181818;transform:scaleX(1.0244);">Accounts</span>
<span class="t" style="left:1106.12px;top:104.00px;font-size:20.8px;letter-spacing:0.258px;color:#181818;transform:scaleX(1.0348);">Contacts</span>
<span class="t" style="left:1273.64px;top:104.00px;font-size:20.8px;letter-spacing:0.101px;color:#181818;transform:scaleX(1.0118);">Campaigns</span>
<span class="t" style="left:1461.16px;top:104.00px;font-size:20.8px;letter-spacing:0.165px;color:#181818;transform:scaleX(1.0207);">Dashboards</span>
<span class="t" style="left:1657.41px;top:104.00px;font-size:20.8px;letter-spacing:0.171px;color:#181818;transform:scaleX(1.0223);">Reports</span>
<span class="t" style="left:1813.62px;top:104.00px;font-size:20.8px;letter-spacing:0.237px;color:#181818;transform:scaleX(1.0329);">Chatter</span>
<span class="t" style="left:1924.38px;top:104.00px;font-size:20.8px;letter-spacing:0.160px;color:#181818;transform:scaleX(1.0184);">Groups</span>
<span class="t" style="left:2074.89px;top:104.00px;font-size:20.8px;letter-spacing:0.097px;color:#181818;transform:scaleX(1.0124);">Calendar</span>
<span class="t" style="left:2241.17px;top:104.00px;font-size:20.8px;letter-spacing:0.146px;color:#181818;transform:scaleX(1.0179);">People</span>
<span class="t" style="left:2387.90px;top:104.00px;font-size:20.8px;letter-spacing:-0.046px;color:#181818;transform:scaleX(0.9952);">Cases</span>
<span class="t" style="left:2526.41px;top:104.00px;font-size:20.8px;letter-spacing:0.165px;color:#181818;transform:scaleX(1.0228);">Forecasts</span>
<span class="t" style="left:122.38px;top:206.00px;font-size:32px;letter-spacing:0.138px;color:#3E3E42;transform:scaleX(1.0118);font-weight:700;-webkit-text-stroke:0;">Recently Viewed</span>
<span class="t" style="left:51.45px;top:278.00px;font-size:19.2px;letter-spacing:0.213px;color:#444347;transform:scaleX(1.0362);">1 item • Updated a minute ago</span>
<span class="t" style="left:104.47px;top:337.00px;font-size:20.8px;letter-spacing:0.180px;color:#706F74;transform:scaleX(1.0336);">Search this list...</span>
<span class="t" style="left:116.07px;top:406.00px;font-size:22.4px;letter-spacing:0.198px;color:#3E3E42;transform:scaleX(1.0246);font-weight:700;-webkit-text-stroke:0;">Recently Viewed</span>
<span class="t" style="left:116.09px;top:469.00px;font-size:20.8px;letter-spacing:0.098px;color:#181818;transform:scaleX(1.0092);">[SMS</span>
<span class="t" style="left:173.63px;top:469.00px;font-size:20.8px;letter-spacing:0.635px;color:#181818;transform:scaleX(1.0600);">5294764040830976]</span>
<span class="t" style="left:392.60px;top:469.00px;font-size:20.8px;letter-spacing:0.151px;color:#181818;transform:scaleX(1.0181);">Outbound SMS</span>
<span class="t" style="left:500.34px;top:500.00px;font-size:19.2px;letter-spacing:0.266px;color:#444347;transform:scaleX(1.0386);">Mary Johnson</span>
<span class="t" style="left:117.19px;top:527.00px;font-size:19.2px;letter-spacing:0.197px;color:#444347;transform:scaleX(1.0306);">Johnson&#x27;s Deal</span>
<span class="t" style="left:489.35px;top:527.00px;font-size:19.2px;letter-spacing:0.616px;color:#444347;transform:scaleX(1.0600);">2024-10-26</span>
<span class="t" style="left:770.70px;top:195.00px;font-size:20.8px;letter-spacing:-0.049px;color:#444347;transform:scaleX(0.9948);">Task</span>
<span class="t" style="left:771.34px;top:219.00px;font-size:28.8px;letter-spacing:0.105px;color:#181818;transform:scaleX(1.0068);font-weight:700;-webkit-text-stroke:0;">[SMS</span>
<span class="t" style="left:853.53px;top:219.00px;font-size:28.8px;letter-spacing:1.250px;color:#181818;transform:scaleX(1.0600);font-weight:700;-webkit-text-stroke:0;">5294764040830976]</span>
<span class="t" style="left:1165.72px;top:219.00px;font-size:28.8px;letter-spacing:0.018px;color:#181818;transform:scaleX(1.0014);font-weight:700;-webkit-text-stroke:0;">Outbound SMS</span>
<span class="t" style="left:2114.17px;top:213.00px;font-size:20.8px;letter-spacing:0.275px;color:#fff;transform:scaleX(1.0347);">Completed</span>
<span class="t" style="left:2279.16px;top:213.00px;font-size:20.8px;letter-spacing:0.196px;color:#0A6FD6;transform:scaleX(1.0259);">Edit Comments</span>
<span class="t" style="left:2480.99px;top:213.00px;font-size:20.8px;letter-spacing:0.114px;color:#0A6FD6;transform:scaleX(1.0144);">Change Date</span>
<span class="t" style="left:2659.48px;top:213.00px;font-size:20.8px;letter-spacing:0.161px;color:#0A6FD6;transform:scaleX(1.0236);">Create Follow-Up Task</span>
<span class="t" style="left:705.37px;top:313.00px;font-size:19.2px;letter-spacing:0.204px;color:#444347;transform:scaleX(1.0192);">Name</span>
<span class="t" style="left:979.26px;top:313.00px;font-size:19.2px;letter-spacing:0.168px;color:#444347;transform:scaleX(1.0261);">Related To</span>
<span class="t lk h" style="left:708.05px;top:350.00px;font-size:22.4px;letter-spacing:0.239px;color:#0B5CAB;transform:scaleX(1.0295);">Mary Johnson</span>
<span class="t lk h" style="left:983.59px;top:350.00px;font-size:22.4px;letter-spacing:0.163px;color:#0B5CAB;transform:scaleX(1.0216);">Johnson&#x27;s Deal</span>
<span class="t" style="left:724.67px;top:456.00px;font-size:25.6px;letter-spacing:0.169px;color:#29272B;transform:scaleX(1.0191);font-weight:700;-webkit-text-stroke:0;">Details</span>
<span class="t" style="left:900.04px;top:456.00px;font-size:25.6px;letter-spacing:0.037px;color:#181818;transform:scaleX(1.0039);">Related</span>
<span class="t" style="left:784.15px;top:540.00px;font-size:19.2px;letter-spacing:0.156px;color:#444347;transform:scaleX(1.0230);">Assigned To</span>
<span class="t lk" style="left:823.33px;top:574.00px;font-size:22.4px;letter-spacing:0.080px;color:#0B5CAB;transform:scaleX(1.0100);">Dev Engineer</span>
<span class="t" style="left:783.08px;top:616.00px;font-size:19.2px;letter-spacing:0.207px;color:#444347;transform:scaleX(1.0304);">Subject</span>
<span class="t" style="left:783.14px;top:651.00px;font-size:22.4px;letter-spacing:0.044px;color:#181818;transform:scaleX(1.0038);">[SMS</span>
<span class="t" style="left:844.57px;top:651.00px;font-size:22.4px;letter-spacing:0.551px;color:#181818;transform:scaleX(1.0600);">5294764040830976]</span>
<span class="t" style="left:1078.06px;top:651.00px;font-size:22.4px;letter-spacing:0.113px;color:#181818;transform:scaleX(1.0125);">Outbound SMS</span>
<span class="t" style="left:782.37px;top:693.00px;font-size:19.2px;letter-spacing:0.138px;color:#444347;transform:scaleX(1.0188);">Due Date</span>
<span class="t" style="left:782.73px;top:727.00px;font-size:22.4px;letter-spacing:0.474px;color:#181818;transform:scaleX(1.0600);">2024-10-26</span>
<span class="t" style="left:782.33px;top:770.00px;font-size:19.2px;letter-spacing:0.236px;color:#444347;transform:scaleX(1.0444);">Priority</span>
<span class="t" style="left:782.04px;top:804.00px;font-size:22.4px;letter-spacing:0.282px;color:#181818;transform:scaleX(1.0317);">Normal</span>
<span class="t" style="left:782.98px;top:860.00px;font-size:19.2px;letter-spacing:0.127px;color:#444347;transform:scaleX(1.0183);">Created By</span>
<span class="t lk" style="left:823.58px;top:893.00px;font-size:22.4px;letter-spacing:0.072px;color:#0B5CAB;transform:scaleX(1.0089);">Dev Engineer</span>
<span class="t" style="left:963.83px;top:893.00px;font-size:22.4px;letter-spacing:0.249px;color:#181818;transform:scaleX(1.0373);">, 2025-10-07, 5:46 a.m.</span>
<span class="t" style="left:782.98px;top:949.00px;font-size:19.2px;letter-spacing:0.208px;color:#444347;transform:scaleX(1.0245);">Comments</span>
<span class="t" style="left:782.88px;top:983.00px;font-size:22.4px;letter-spacing:0.164px;color:#181818;transform:scaleX(1.0226);">Outbound via Dialpad at 06:00 GMT</span>
<span class="t" style="left:782.07px;top:1051.00px;font-size:22.4px;letter-spacing:0.115px;color:#181818;transform:scaleX(1.0172);">Message: Hey Lara! Can we set up a call for this afternoon?</span>
<span class="t" style="left:782.06px;top:1118.00px;font-size:22.4px;letter-spacing:0.160px;color:#181818;transform:scaleX(1.0221);">From: Lara Dev (+1 581-555-5418)</span>
<span class="t" style="left:783.38px;top:1151.00px;font-size:22.4px;letter-spacing:0.217px;color:#181818;transform:scaleX(1.0302);">To: Mary Johnson (+1 816-555-7466)</span>
<span class="t" style="left:782.05px;top:1219.00px;font-size:22.4px;letter-spacing:0.188px;color:#181818;transform:scaleX(1.0262);">No matching user was found.</span>
<span class="t" style="left:1879.57px;top:540.00px;font-size:19.2px;letter-spacing:0.234px;color:#444347;transform:scaleX(1.0342);">Status</span>
<span class="t" style="left:1879.27px;top:574.00px;font-size:22.4px;letter-spacing:0.252px;color:#181818;transform:scaleX(1.0294);">Completed</span>
<span class="t" style="left:1878.87px;top:617.00px;font-size:19.2px;letter-spacing:0.211px;color:#444347;transform:scaleX(1.0198);">Name</span>
<span class="t lk" style="left:1882.05px;top:651.00px;font-size:22.4px;letter-spacing:0.205px;color:#0B5CAB;transform:scaleX(1.0252);">Mary Johnson</span>
<span class="t" style="left:1878.86px;top:694.00px;font-size:19.2px;letter-spacing:0.154px;color:#444347;transform:scaleX(1.0237);">Related To</span>
<span class="t lk" style="left:1883.59px;top:727.00px;font-size:22.4px;letter-spacing:0.154px;color:#0B5CAB;transform:scaleX(1.0204);">Johnson&#x27;s Deal</span>
<span class="t" style="left:1878.84px;top:860.00px;font-size:19.2px;letter-spacing:0.233px;color:#444347;transform:scaleX(1.0387);">Last Modified By</span>
<span class="t lk" style="left:1920.09px;top:893.00px;font-size:22.4px;letter-spacing:0.066px;color:#0B5CAB;transform:scaleX(1.0082);">Dev Engineer</span>
<span class="t" style="left:2060.33px;top:893.00px;font-size:22.4px;letter-spacing:0.250px;color:#181818;transform:scaleX(1.0374);">, 2025-10-07, 5:46 a.m.</span>
<span class="t" style="left:49.49px;top:1427.00px;font-size:20.8px;letter-spacing:0.118px;color:#181818;transform:scaleX(1.0176);">To Do List</span>
</div>
</body></html>
